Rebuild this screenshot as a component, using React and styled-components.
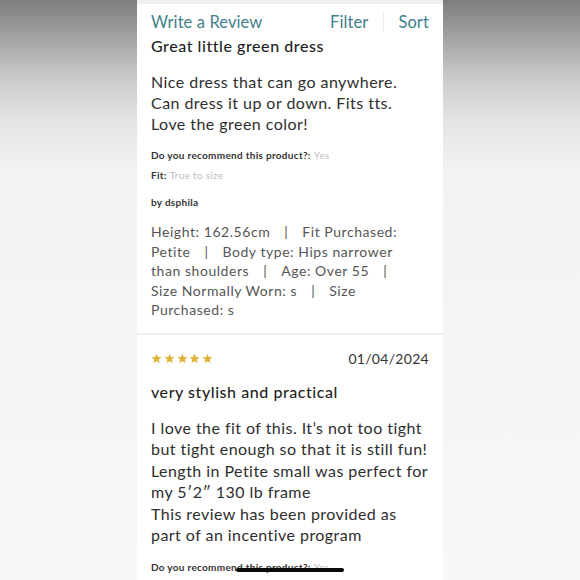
import React from 'react'
import styled, { createGlobalStyle } from 'styled-components'

const GlobalStyle = createGlobalStyle`
  html, body {
    margin: 0;
    padding: 0;
  }
  body {
    width: 580px;
    height: 580px;
    overflow: hidden;
    font-family: 'Lato', 'Open Sans', sans-serif;
    background: linear-gradient(
      to bottom,
      #7e7e7e 0px,
      #a0a0a0 35px,
      #c8c8c8 75px,
      #e4e4e4 120px,
      #f2f2f2 170px,
      #f8f8f8 100%
    );
  }
`

const Stage = styled.div`
  display: flex;
  height: 580px;
  padding-left: 137px;
`

const Phone = styled.div`
  position: relative;
  width: 306px;
  height: 580px;
  overflow: hidden;
  background: #eeeff0;
  padding-top: 4px;
  box-sizing: border-box;
  display: flex;
  flex-direction: column;
  gap: 2px;
`

const Card = styled.div`
  background: #fff;
  padding: ${props => props.pad || '0 14px'};
  display: flex;
  flex-direction: column;
  flex: ${props => (props.grow ? 1 : 'none')};
`

const Toolbar = styled.div`
  display: flex;
  align-items: center;
  padding-top: 8px;
  font-size: 16.5px;
  line-height: 20px;
  color: #3f808b;
  letter-spacing: 0.1px;
`

const ToolLink = styled.span`
  margin-left: ${props => (props.push ? 'auto' : '0')};
`

const ToolDivider = styled.span`
  width: 1px;
  height: 20px;
  background: #ececec;
  margin: 0 14px 0 15px;
`

const Title = styled.div`
  font-size: 16px;
  line-height: 20px;
  font-weight: 500;
  color: #1f1f1f;
  margin-top: ${props => props.mt || 0}px;
  letter-spacing: 0.55px;
`

const Body = styled.div`
  font-size: 16px;
  line-height: ${props => props.lh || 21}px;
  color: #2e2e2e;
  margin-top: ${props => props.mt || 0}px;
  letter-spacing: 0.45px;
`

const Line = styled.div`
  white-space: nowrap;
`

const Meta = styled.div`
  font-size: 10px;
  line-height: 19.5px;
  font-weight: 700;
  color: #333;
  margin-top: ${props => props.mt || 0}px;
  letter-spacing: 0.3px;
`

const MetaValue = styled.span`
  font-weight: 400;
  color: #bdbdbd;
  margin-left: 3px;
`

const Author = styled.div`
  font-size: 10px;
  line-height: 14px;
  font-weight: 700;
  color: #333;
  margin-top: 10px;
  letter-spacing: 0.3px;
`

const Details = styled.div`
  font-size: 14px;
  line-height: 19.6px;
  color: #565656;
  margin-top: 13px;
  letter-spacing: 0.55px;
`

const Sep = styled.span`
  margin: 0 14px;
  color: #555;
`

const RatingRow = styled.div`
  display: flex;
  align-items: center;
  justify-content: space-between;
  font-size: 14px;
  line-height: 20px;
  color: #333;
  letter-spacing: 0.3px;
`

const Stars = styled.div`
  display: flex;
  gap: 1.8px;
`

const HomeBar = styled.div`
  position: absolute;
  left: 99px;
  bottom: 8px;
  width: 108px;
  height: 4px;
  border-radius: 2px;
  background: #0a0a0a;
`

const Star = () => (
  <svg width="11" height="11" viewBox="0 0 24 24">
    <polygon
      fill="#e2b43c"
      points="12,1.5 15.1,8.6 22.8,9.3 17,14.4 18.7,22 12,18 5.3,22 7,14.4 1.2,9.3 8.9,8.6"
    />
  </svg>
)

const details = [
  ['Height: 162.56cm', '|', 'Fit Purchased:'],
  ['Petite', '|', 'Body type: Hips narrower'],
  ['than shoulders', '|', 'Age: Over 55', '|'],
  ['Size Normally Worn: s', '|', 'Size'],
  ['Purchased: s']
]

const firstBody = [
  'Nice dress that can go anywhere.',
  'Can dress it up or down. Fits tts.',
  'Love the green color!'
]

const secondBody = [
  'I love the fit of this. It\u2019s not too tight',
  'but tight enough so that it is still fun!',
  'Length in Petite small was perfect for',
  'my 5\u20322\u2033 130 lb frame',
  'This review has been provided as',
  'part of an incentive program'
]

const App = () => (
  <>
    <GlobalStyle />
    <Stage>
      <Phone>
        <Card pad="0 14px 13px">
          <Toolbar>
            <ToolLink>Write a Review</ToolLink>
            <ToolLink push>Filter</ToolLink>
            <ToolDivider />
            <ToolLink>Sort</ToolLink>
          </Toolbar>
          <Title mt={4}>Great little green dress</Title>
          <Body mt={15}>
            {firstBody.map(l => (
              <Line key={l}>{l}</Line>
            ))}
          </Body>
          <Meta mt={12}>
            Do you recommend this product?:<MetaValue>Yes</MetaValue>
          </Meta>
          <Meta>
            Fit:<MetaValue>True to size</MetaValue>
          </Meta>
          <Author>by dsphila</Author>
          <Details>
            {details.map((parts, i) => (
              <Line key={i}>
                {parts.map((p, j) => (p === '|' ? <Sep key={j}>|</Sep> : <span key={j}>{p}</span>))}
              </Line>
            ))}
          </Details>
        </Card>
        <Card pad="14px 14px 0" grow>
          <RatingRow>
            <Stars>
              <Star />
              <Star />
              <Star />
              <Star />
              <Star />
            </Stars>
            <span>01/04/2024</span>
          </RatingRow>
          <Title mt={13}>very stylish and practical</Title>
          <Body mt={15} lh={21.4}>
            {secondBody.map(l => (
              <Line key={l}>{l}</Line>
            ))}
          </Body>
          <Meta mt={13}>
            Do you recommend this product?:<MetaValue>Yes</MetaValue>
          </Meta>
        </Card>
        <HomeBar />
      </Phone>
    </Stage>
  </>
)

export default App
